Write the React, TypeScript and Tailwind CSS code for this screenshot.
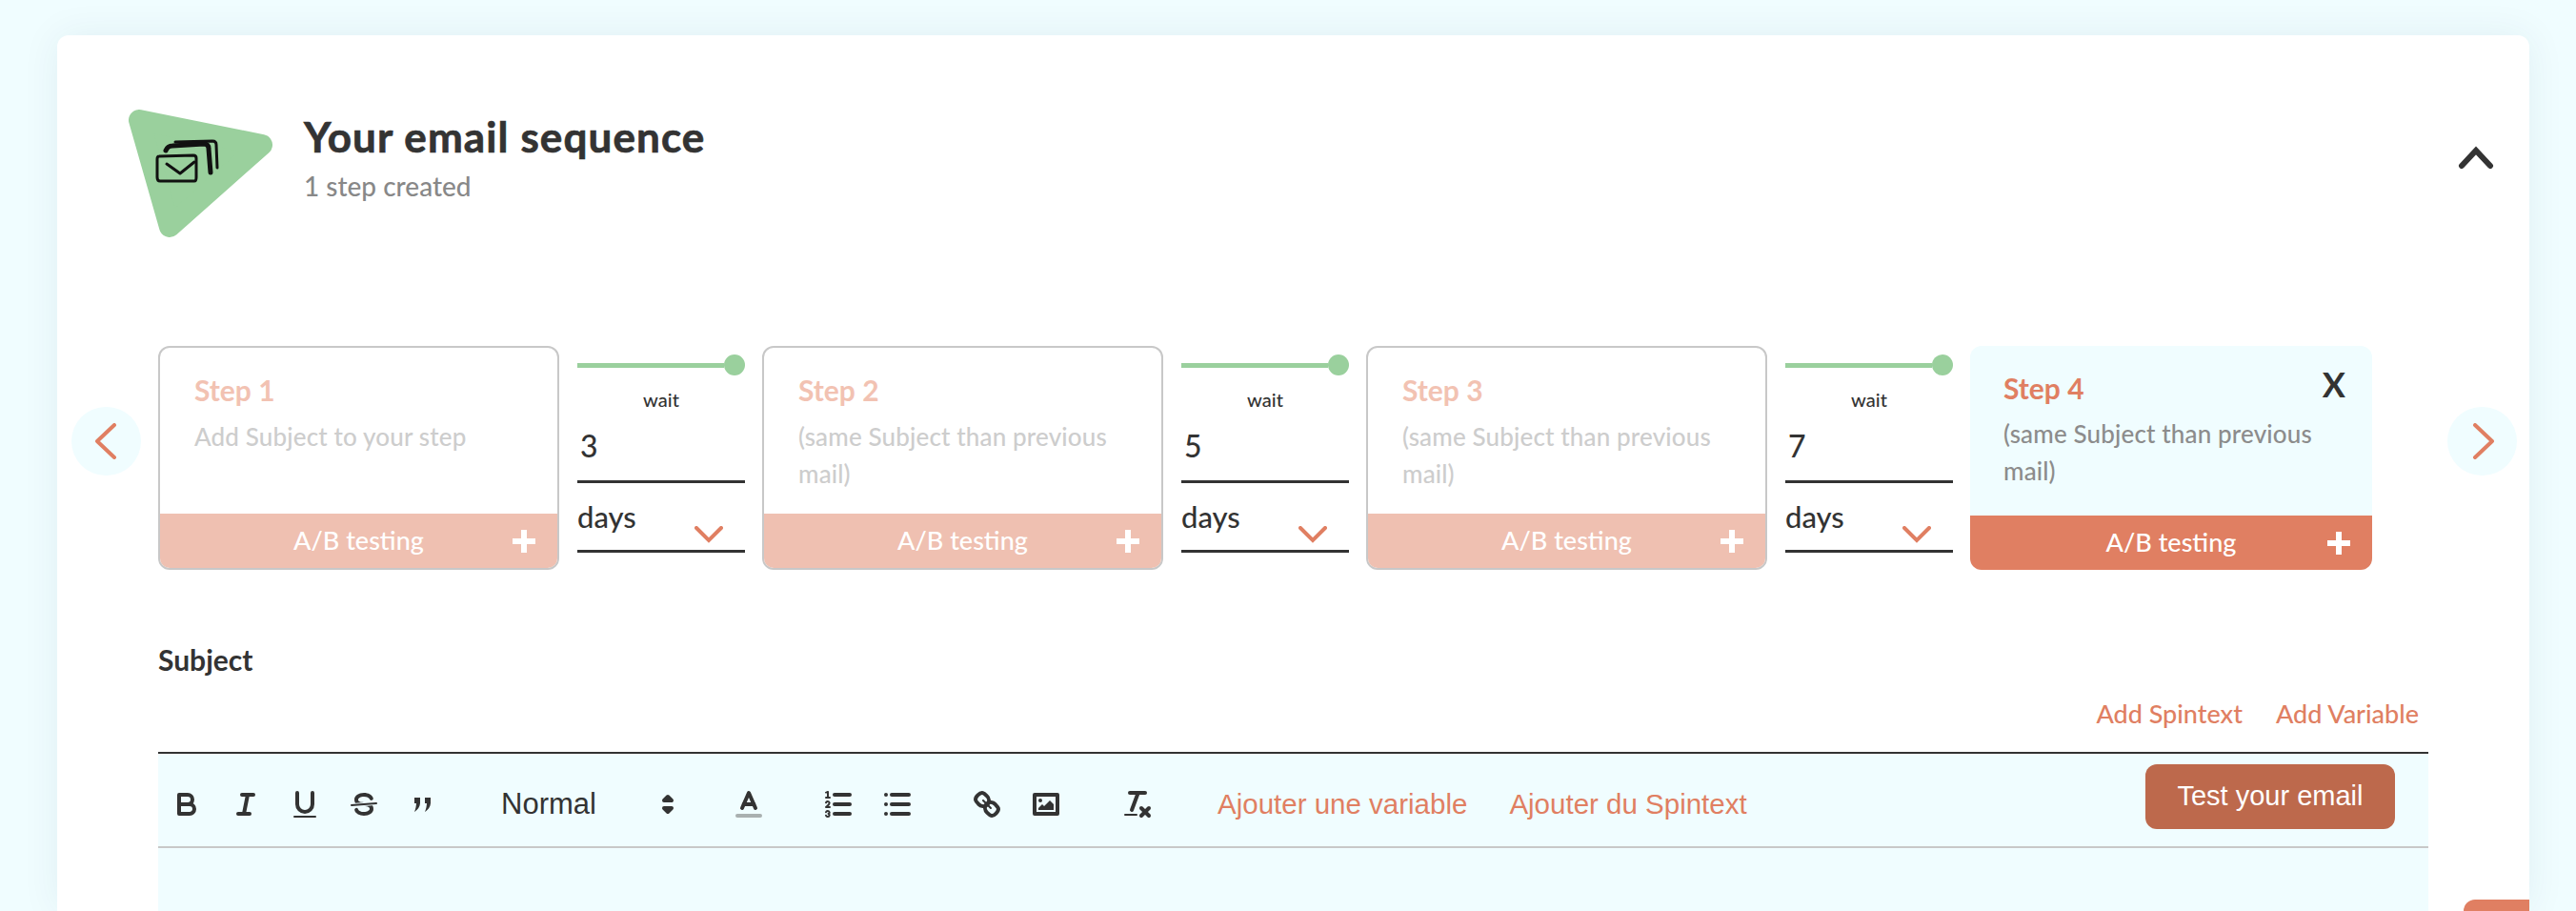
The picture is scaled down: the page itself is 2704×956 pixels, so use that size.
import React from "react";

const S = { fill: "none", stroke: "#333", strokeWidth: 2, strokeLinecap: "round", strokeLinejoin: "round" } as const;
const T = { ...S, strokeWidth: 1 } as const;

function Q({ className = "", children }: { className?: string; children: React.ReactNode }) {
  return (
    <svg viewBox="0 0 18 18" className={`w-9 h-9 shrink-0 ${className}`}>
      {children}
    </svg>
  );
}

function StepCard({ n, text, active }: { n: number; text: string; active?: boolean }) {
  return (
    <div
      className={
        active
          ? "w-[422px] h-[235px] shrink-0 flex flex-col rounded-[12px] overflow-hidden bg-[#f0fdff]"
          : "w-[421px] h-[235px] shrink-0 flex flex-col rounded-[12px] overflow-hidden bg-white border-2 border-[#c8c8c8]"
      }
    >
      <div className={active ? "flex-1 pl-[35px] pr-[26px] pt-[24px]" : "flex-1 pl-[36px] pr-[26px] pt-[24px]"}>
        <div className="flex items-start justify-between">
          <div className={active ? "text-[30px] leading-[40px] font-bold text-[#e07f62]" : "text-[30px] leading-[40px] font-bold text-[#f2c2b2]"}>
            Step {n}
          </div>
          {active && <div className="text-[36px] leading-[40px] font-bold text-[#333] mr-[2px] -mt-[4px]">X</div>}
        </div>
        <div className={active ? "mt-[9px] text-[26px] leading-[39px] text-[#8c8c8c] font-medium tracking-[0.15px]" : "mt-[10px] text-[26px] leading-[39px] text-[#cdcdcd] font-medium tracking-[0.15px]"}>
          {text}
        </div>
      </div>
      <div
        className={
          active
            ? "h-[57px] relative flex items-center justify-center bg-[#e07f62] text-white text-[27px] font-medium"
            : "h-[57px] relative flex items-center justify-center bg-[#efc0b1] text-white text-[27px] font-medium"
        }
      >
        A/B testing
        <svg viewBox="0 0 24 24" className="absolute right-[23px] top-[17px] w-6 h-6">
          <path d="M12 0v24M0 12h24" stroke="#fff" strokeWidth="6" />
        </svg>
      </div>
    </div>
  );
}

function Wait({ days }: { days: number }) {
  return (
    <div className="w-[176px] shrink-0 flex flex-col pt-[9px] ml-[19px] mr-[18px]">
      <div className="flex items-center h-[22px]">
        <div className="flex-1 h-[5px] bg-[#9ad09d]" />
        <div className="w-[22px] h-[22px] rounded-full bg-[#9ad09d]" />
      </div>
      <div className="mt-[14px] h-[22px] leading-[22px] text-[20px] font-medium text-[#333] text-center">wait</div>
      <div className="h-[77px] flex items-center pl-[3px] pt-[2px] border-b-[3px] border-[#333] text-[32px] text-[#333] font-medium">{days}</div>
      <div className="h-[73px] flex items-center border-b-[3px] border-[#333] text-[31px] text-[#333] font-medium">
        <span className="leading-[36px]">days</span>
        <svg viewBox="0 0 30 18" className="w-[30px] h-[18px] ml-auto mr-[23px] mt-[38px]">
          <path d="M2 2 L15 15 L28 2" fill="none" stroke="#e07f62" strokeWidth="4" strokeLinecap="round" />
        </svg>
      </div>
    </div>
  );
}

function Arrow({ dir, className }: { dir: "l" | "r"; className: string }) {
  return (
    <div className={`w-[73px] h-[72px] rounded-full bg-[#f0fdff] shrink-0 self-start mt-[64px] flex items-center justify-center ${className}`}>
      <svg viewBox="0 0 24 38" className="w-[24px] h-[38px]">
        <path d={dir === "l" ? "M21 2 L3 19 L21 36" : "M3 2 L21 19 L3 36"} fill="none" stroke="#e07f62" strokeWidth="4" strokeLinecap="round" strokeLinejoin="round" transform={dir === "l" ? "translate(-1 0)" : "translate(1 0)"} />
      </svg>
    </div>
  );
}

export default function App() {
  const same = "(same Subject than previous mail)";
  return (
    <div className="h-[956px] overflow-hidden bg-[#f0fdff] pt-[37px] pl-[60px] pr-[49px]" style={{ fontFamily: "Lato, 'Noto Sans', sans-serif" }}>
      <div className="relative h-[919px] bg-white rounded-t-[12px] shadow-[0_0_40px_rgba(0,60,80,0.07)] pt-[78px]">
        {/* header */}
        <div className="flex items-start pl-[75px]">
          <svg viewBox="0 0 152 135" className="w-[152px] h-[135px] shrink-0">
            <polygon points="11,11 140,37 43,123" fill="#9ad09d" stroke="#9ad09d" strokeWidth="22" strokeLinejoin="round" />
            <g fill="none" stroke="#111" strokeLinecap="round" strokeLinejoin="round">
              <path d="M32 49 Q30 49 30 52 L30 71 Q30 75 33 75 L69 75 Q71 75 71 71 L71 51 Q71 48 68 48 Z" strokeWidth="3" />
              <path d="M40 57 L54 67 L69 55" strokeWidth="3" />
              <path d="M39 43 Q41 38 46 38 L79 36 Q84 36 84 41 L86 66" strokeWidth="5" />
              <path d="M49 34 L88 33 Q92 33 92 37 L93 61" strokeWidth="3" />
            </g>
          </svg>
          <div className="ml-[32px] pt-[5px]">
            <div className="text-[44px] leading-[46px] font-bold text-[#333] tracking-[1.1px] whitespace-nowrap [-webkit-text-stroke:0.7px_#333]">Your email sequence</div>
            <div className="mt-[11px] text-[28px] leading-[36px] font-medium text-[#888]">1 step created</div>
          </div>
          <svg viewBox="0 0 40 26" className="w-[40px] h-[26px] ml-auto mr-[36px] mt-[37px] shrink-0">
            <path d="M5 22 L20 6 L35 22" fill="none" stroke="#333" strokeWidth="6" strokeLinecap="round" strokeLinejoin="miter" />
          </svg>
        </div>

        {/* carousel */}
        <div className="flex mt-[113px] pl-[15px]">
          <Arrow dir="l" className="mr-[18px]" />
          <StepCard n={1} text="Add Subject to your step" />
          <Wait days={3} />
          <StepCard n={2} text={same} />
          <Wait days={5} />
          <StepCard n={3} text={same} />
          <Wait days={7} />
          <StepCard n={4} text={same} active />
          <Arrow dir="r" className="ml-[79px]" />
        </div>

        {/* subject + editor */}
        <div className="ml-[106px] w-[2383px] mt-[77px]">
          <div className="h-[34px] leading-[34px] text-[30px] font-bold text-[#333]">Subject</div>
          <div className="mt-[23px] h-[34px] flex justify-end items-center gap-[35px] pr-[10px] text-[27px] font-medium text-[#e07f62]">
            <span>Add Spintext</span>
            <span>Add Variable</span>
          </div>
          <div className="mt-[23px] border-t-2 border-[#333] bg-[#f0fdff] h-[232px]">
            <div className="h-[99px] border-b-2 border-[#c8c8c8] flex items-center pl-[12px] pt-[9px]" style={{ fontFamily: "'Liberation Sans', Arial, sans-serif" }}>
              <div className="flex gap-[26px]">
                <Q>
                  <path {...S} d="M5,4H9.5A2.5,2.5,0,0,1,12,6.5v0A2.5,2.5,0,0,1,9.5,9H5A0,0,0,0,1,5,9V4A0,0,0,0,1,5,4Z" />
                  <path {...S} d="M5,9h5.5A2.5,2.5,0,0,1,13,11.5v0A2.5,2.5,0,0,1,10.5,14H5a0,0,0,0,1,0,0V9A0,0,0,0,1,5,9Z" />
                </Q>
                <Q>
                  <line {...S} x1="7" x2="13" y1="4" y2="4" />
                  <line {...S} x1="5" x2="11" y1="14" y2="14" />
                  <line {...S} x1="8" x2="10" y1="14" y2="4" />
                </Q>
                <Q>
                  <path {...S} d="M5,3V9a4.012,4.012,0,0,0,4,4H9a3.992,3.992,0,0,0,4-4V3" />
                  <rect fill="#333" height="1" rx=".5" ry=".5" width="12" x="3" y="15" />
                </Q>
                <Q>
                  <line {...T} x1="15.5" x2="2.5" y1="8.5" y2="9.5" />
                  <path fill="#333" d="M9.007,8C6.542,7.791,6,7.519,6,6.5,6,5.792,7.283,5,9,5c1.571,0,2.765.679,2.969,1.309a1,1,0,0,0,1.9-.617C13.356,4.106,11.354,3,9,3,6.2,3,4,4.538,4,6.5a3.2,3.2,0,0,0,.5,1.843Z" />
                  <path fill="#333" d="M8.984,10C11.457,10.208,12,10.479,12,11.5c0,.708-1.283,1.5-3,1.5-1.571,0-2.765-.679-2.969-1.309a1,1,0,1,0-1.9.617C4.644,13.894,6.646,15,9,15c2.8,0,5-1.538,5-3.5a3.2,3.2,0,0,0-.5-1.843Z" />
                </Q>
                <Q>
                  <rect fill="#333" x="4.5" y="5.5" width="3" height="3" />
                  <rect fill="#333" x="10" y="5.5" width="3" height="3" />
                  <path fill="#333" d="M7.5,8C7.5,10.5,6,12,4.5,13 C5.1,11.5,5.5,10,5.5,8Z" />
                  <path fill="#333" d="M13,8C13,10.5,11.5,12,10,13 C10.6,11.5,11,10,11,8Z" />
                </Q>
              </div>
              <span className="ml-[64px] w-[104px] text-[31px] leading-[36px] font-normal text-[#333] whitespace-nowrap">Normal</span>
              <Q className="ml-[53px]">
                <polygon {...S} fill="#333" points="7 11 9 13 11 11 7 11" />
                <polygon {...S} fill="#333" points="7 7 9 5 11 7 7 7" />
              </Q>
              <Q className="ml-[49px]">
                <line {...S} stroke="#a9b0b0" x1="3" x2="15" y1="15" y2="15" />
                <polyline {...S} points="5.5 11 9 3 12.5 11" />
                <line {...S} x1="11.63" x2="6.38" y1="9" y2="9" />
              </Q>
              <Q className="ml-[58px]">
                <line {...S} x1="7" x2="15" y1="4" y2="4" />
                <line {...S} x1="7" x2="15" y1="9" y2="9" />
                <line {...S} x1="7" x2="15" y1="14" y2="14" />
                <line {...T} x1="2.5" x2="4.5" y1="5.5" y2="5.5" />
                <path fill="#333" d="M3.5,6A0.5,0.5,0,0,1,3,5.5V3.085l-0.276.138A0.5,0.5,0,0,1,2.053,3c-0.124-.247-0.023-0.324.224-0.447l1-.5A0.5,0.5,0,0,1,4,2.5v3A0.5,0.5,0,0,1,3.5,6Z" />
                <path {...T} d="M4.5,10.5h-2c0-.234,1.85-1.076,1.85-2.234A0.959,0.959,0,0,0,2.5,8.156" />
                <path {...T} d="M2.5,14.846a0.959,0.959,0,0,0,1.85-.109A0.7,0.7,0,0,0,3.75,14a0.688,0.688,0,0,0,.6-0.736,0.959,0.959,0,0,0-1.85-.109" />
              </Q>
              <Q className="ml-[26px]">
                <line {...S} x1="6" x2="15" y1="4" y2="4" />
                <line {...S} x1="6" x2="15" y1="9" y2="9" />
                <line {...S} x1="6" x2="15" y1="14" y2="14" />
                <line {...S} x1="3" x2="3" y1="4" y2="4" />
                <line {...S} x1="3" x2="3" y1="9" y2="9" />
                <line {...S} x1="3" x2="3" y1="14" y2="14" />
              </Q>
              <Q className="ml-[58px]">
                <line {...T} x1="7" x2="11" y1="7" y2="11" />
                <path {...S} d="M8.9,4.577a3.476,3.476,0,0,1,.36,4.679A3.476,3.476,0,0,1,4.577,8.9C3.185,7.5,2.035,6.4,4.217,4.217S7.5,3.185,8.9,4.577Z" />
                <path {...S} d="M13.423,9.1a3.476,3.476,0,0,0-4.679-.36,3.476,3.476,0,0,0,.36,4.679c1.392,1.392,2.5,2.542,4.679.36S14.815,10.5,13.423,9.1Z" />
              </Q>
              <Q className="ml-[26px]">
                <rect {...S} height="10" width="12" x="3" y="4" />
                <circle fill="#333" cx="6" cy="7" r="1" />
                <polyline fill="#333" points="5 12 5 11 7 9 8 10 11 7 13 9 13 12 5 12" />
              </Q>
              <Q className="ml-[60px]">
                <line {...S} x1="5" x2="13" y1="3" y2="3" />
                <line {...S} x1="6" x2="9.35" y1="12" y2="3" />
                <line {...S} x1="11" x2="15" y1="11" y2="15" />
                <line {...S} x1="15" x2="11" y1="11" y2="15" />
                <rect fill="#333" height="1" rx=".5" ry=".5" width="7" x="2" y="14" />
              </Q>
              <span className="ml-[66px] text-[29.5px] text-[#e07f62] whitespace-nowrap">Ajouter une variable</span>
              <span className="ml-[44px] text-[29.5px] text-[#e07f62] whitespace-nowrap">Ajouter du Spintext</span>
              <button className="ml-auto mr-[35px] mb-[16px] w-[262px] h-[68px] rounded-[12px] bg-[#bd694c] text-white text-[29px]">Test your email</button>
            </div>
          </div>
        </div>

        <div className="absolute right-0 bottom-0 w-[69px] h-[12px] bg-[#e07f62] rounded-tl-[12px]" />
      </div>
    </div>
  );
}
